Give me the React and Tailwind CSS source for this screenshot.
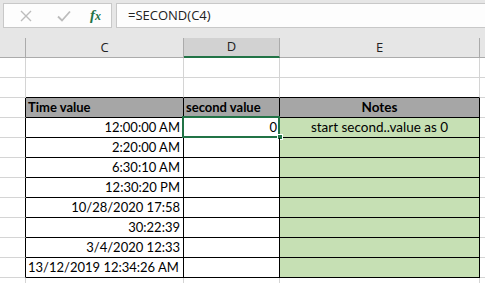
const rows = [
  { c: '', d: '', e: '' },
  { c: '', d: '', e: '' },
  { c: 'Time value', d: 'second value', e: 'Notes', head: true },
  { c: '12:00:00 AM', d: '0', e: 'start second..value as 0', sel: true },
  { c: '2:20:00 AM' },
  { c: '6:30:10 AM' },
  { c: '12:30:20 PM' },
  { c: '10/28/2020 17:58' },
  { c: '30:22:39' },
  { c: '3/4/2020 12:33' },
  { c: '13/12/2019 12:34:26 AM', left: true },
  { c: '' },
]

function Row({ r, i }) {
  const inTable = i >= 2 && i <= 10
  const topOfTable = i >= 1 && i <= 10
  const bottom = topOfTable ? 'border-b-black' : 'border-b-[#d4d4d4]'
  const side = inTable ? 'border-r-black' : 'border-r-[#d4d4d4]'
  const fill = r.head ? 'bg-[#a6a6a6]' : ''
  const green = i >= 3 && i <= 10 ? 'bg-[#c6e0b4]' : fill

  return (
    <div className="flex h-[20px]">
      <div className={`w-[26px] border-r border-b border-b-[#d4d4d4] ${side}`} />
      <div
        className={`w-[158px] border-r border-b ${side} ${bottom} ${fill} flex items-center ${
          r.head || r.left ? 'justify-start pl-[2px]' : 'justify-end pr-[3px]'
        } ${r.head ? 'font-bold' : ''} whitespace-nowrap`}
      >
        {r.c}
      </div>
      <div
        className={`relative w-[96px] border-r border-b ${side} ${bottom} ${fill} flex items-center ${
          r.head ? 'justify-start pl-[2px] font-bold' : 'justify-end pr-[2px]'
        }`}
      >
        {r.d}
        {r.sel && (
          <>
            <div className="absolute left-[-2px] top-[-2px] w-[98px] h-[22px] border-2 border-[#217346]" />
            <div className="absolute left-[93px] top-[16px] w-[6px] h-[6px] bg-[#217346] border border-white" />
          </>
        )}
      </div>
      <div
        className={`w-[200px] border-r border-b ${side} ${bottom} ${green} flex items-center justify-center text-[13.5px] ${
          r.head ? 'font-bold' : ''
        }`}
      >
        {r.e}
      </div>
      <div className="flex-1 border-b border-[#d4d4d4]" />
    </div>
  )
}

export default function App() {
  return (
    <div className="w-[485px] h-[283px] overflow-hidden bg-white text-black font-['Lato',sans-serif] text-[13px]">
      <div className="h-[38px] bg-[#e6e6e6] flex gap-[4px] pl-[3px] pt-[3px]">
        <div className="w-[109px] h-[25px] bg-[#fdfdfd] border border-[#c8c8c8] flex items-center">
          <svg width="12" height="12" viewBox="0 0 12 12" className="ml-[16px]">
            <path d="M1 1L11 11M11 1L1 11" stroke="#bcbcbc" strokeWidth="1.4" />
          </svg>
          <svg width="14" height="12" viewBox="0 0 14 12" className="ml-[25px]">
            <path d="M1 6.5L5 10.5L13 1.5" stroke="#bcbcbc" strokeWidth="1.8" fill="none" />
          </svg>
          <span className="ml-[19px] font-['Liberation_Serif',serif] italic font-bold text-[15px] text-[#217346] leading-none">
            f<span className="text-[12px]">x</span>
          </span>
        </div>
        <div className="flex-1 h-[25px] bg-[#fdfdfd] border border-r-0 border-[#c8c8c8] flex items-center pl-[11px] font-['Open_Sans',sans-serif] text-[13px] text-[#222]">
          =SECOND(C4)
        </div>
      </div>
      <div className="flex h-[20px] bg-[#e6e6e6] font-['Open_Sans',sans-serif] text-[13px] text-[#222]">
        <div className="w-[26px] border-r border-b border-[#ababab]" />
        <div className="w-[158px] border-r border-b border-[#ababab] flex items-center justify-center">C</div>
        <div className="w-[96px] border-r border-b-2 border-r-[#ababab] border-b-[#217346] bg-[#d2d2d2] flex items-center justify-center">D</div>
        <div className="w-[200px] border-r border-b border-[#ababab] flex items-center justify-center">E</div>
        <div className="flex-1 border-b border-[#ababab]" />
      </div>
      {rows.map((r, i) => (
        <Row key={i} r={r} i={i} />
      ))}
    </div>
  )
}
